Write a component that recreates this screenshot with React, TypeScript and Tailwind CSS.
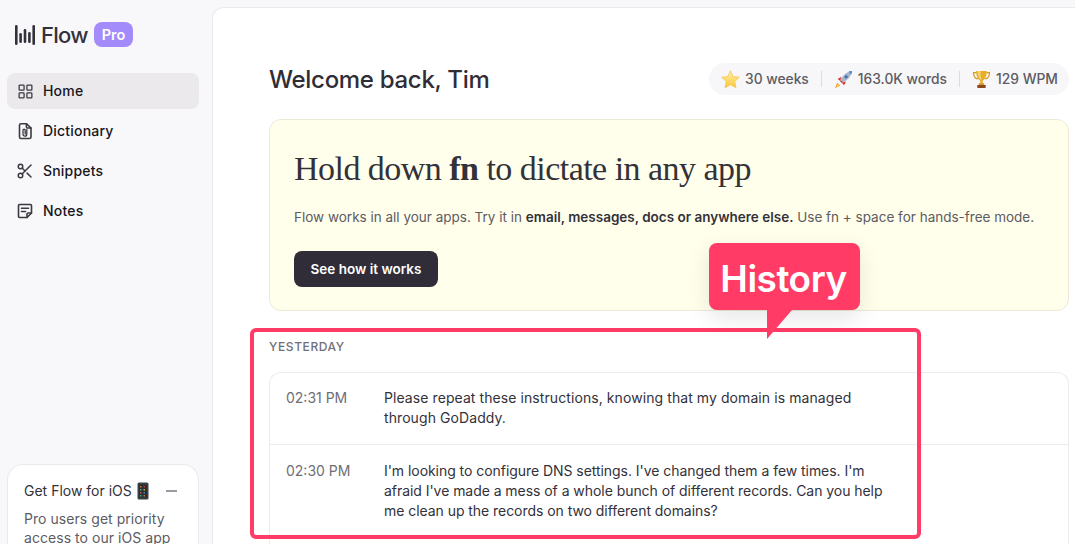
import { LayoutGrid, Scissors } from "lucide-react";

const DictIcon = () => (
  <svg width="18" height="18" viewBox="0 0 18 18" fill="none" stroke="#3b3a42" strokeWidth="1.6" strokeLinecap="round" strokeLinejoin="round">
    <path d="M5 1.800h5.600L15 6v9a1.500 1.500 0 0 1-1.500 1.500h-8.500A1.500 1.500 0 0 1 3.500 15V3.300A1.500 1.500 0 0 1 5 1.800z" />
    <path d="M10.400 1.800v3.200a1 1 0 0 0 1 1H15" />
    <path d="M10.800 7.500v4.700a1.900 1.900 0 0 1-3.800 0V8.300a1.100 1.100 0 0 1 2.200 0v3.700" strokeWidth="1.300" />
  </svg>
);

const NotesIcon = () => (
  <svg width="18" height="18" viewBox="0 0 18 18" fill="none" stroke="#3b3a42" strokeWidth="1.6" strokeLinecap="round" strokeLinejoin="round">
    <path d="M3.500 2.500h11a1 1 0 0 1 1 1V11l-4.500 4.500H3.500a1 1 0 0 1-1-1v-11a1 1 0 0 1 1-1z" />
    <path d="M15.500 11H12a1 1 0 0 0-1 1v3.500" />
    <path d="M5.500 6.300h7M5.500 9.500h4" />
  </svg>
);

const FlowMark = () => (
  <svg width="20" height="20" viewBox="0 0 20 20" fill="#33313a">
    <rect x="0" y="0" width="2.600" height="20" rx="1.300" />
    <rect x="4.300" y="8" width="2.600" height="10" rx="1.300" />
    <rect x="8.700" y="4" width="2.600" height="14" rx="1.300" />
    <rect x="13.100" y="7" width="2.600" height="11" rx="1.300" />
    <rect x="17.400" y="0" width="2.600" height="20" rx="1.300" />
  </svg>
);

const Star = () => (
  <svg width="19" height="19" viewBox="0 0 18 18">
    <defs>
      <linearGradient id="st" x1="0" y1="0" x2="0" y2="1">
        <stop offset="0" stopColor="#fff0a8" />
        <stop offset="1" stopColor="#fcc93a" />
      </linearGradient>
    </defs>
    <path d="M9 .8l2.500 5.400 5.900.700-4.400 4 1.200 5.900L9 13.900l-5.200 2.900L5 10.900.6 6.900l5.900-.7z" fill="url(#st)" stroke="#f5b93a" strokeWidth=".6" strokeLinejoin="round" />
  </svg>
);

const Rocket = () => (
  <svg width="19" height="19" viewBox="0 0 18 18">
    <path d="M1 17l2-5 3 3z" fill="#f59a23" />
    <path d="M2.500 16l1-2.500 1.500 1.500z" fill="#ffd75e" />
    <path d="M3.500 8.500L7 6.500 6 10.500z" fill="#d8322f" />
    <path d="M9.500 14.500L11.500 11 7.500 12z" fill="#d8322f" />
    <path d="M5.800 10.600C7.500 6 11.500 1.800 17 1c-.7 5.500-5 9.500-9.500 11.200z" fill="#a9b5c7" />
    <path d="M13.500 1.700c.9.300 2 1.300 2.800 2.800.4-1 .6-2.300.7-3.500-1.200.1-2.400.3-3.500.7z" fill="#4a7fc4" />
    <circle cx="11.500" cy="6.500" r="1.500" fill="#3b6fb5" />
    <path d="M5.800 10.600l1.700 1.600 1-.5-2.200-2.100z" fill="#d8322f" />
  </svg>
);

const Trophy = () => (
  <svg width="19" height="19" viewBox="0 0 18 18">
    <path d="M4.500 2.500H1.500c0 3.500 1.500 5.500 4 6M13.500 2.500h3c0 3.500-1.500 5.500-4 6" fill="none" stroke="#d99a1c" strokeWidth="1.200" />
    <path d="M4 1h10c0 5-1.500 8-3.800 9v3H7.800v-3C5.500 9 4 6 4 1z" fill="#e8ad2a" />
    <path d="M5.500 1H8c0 4 .3 6.500 1 8.500C7 9 5.500 5.500 5.500 1z" fill="#f7d774" />
    <rect x="6.500" y="12.500" width="5" height="1.800" fill="#d99a1c" />
    <rect x="5" y="14.300" width="8" height="2.700" rx=".4" fill="#8a4a1c" />
  </svg>
);

const Phone = () => (
  <svg width="12" height="18" viewBox="0 0 12 18">
    <rect x=".5" y=".5" width="11" height="17" rx="1.500" fill="#3c4043" />
    <rect x="2" y="2.500" width="8" height="13" fill="#2a2d31" />
    <rect x="3" y="4" width="1.500" height="1.500" fill="#c9773a" />
    <rect x="6.500" y="4" width="1.500" height="1.500" fill="#b33" />
    <rect x="3" y="7" width="1.500" height="1.500" fill="#4a8" />
    <rect x="6.500" y="7" width="1.500" height="1.500" fill="#d9a93a" />
    <rect x="3" y="10" width="1.500" height="1.500" fill="#c55" />
    <rect x="6.500" y="10" width="1.500" height="1.500" fill="#48a" />
    <rect x="3" y="13" width="1.500" height="1.500" fill="#4a8" />
    <rect x="6.500" y="13" width="1.500" height="1.500" fill="#c9773a" />
  </svg>
);

const nav = [
  { label: "Home", icon: <LayoutGrid size={17} strokeWidth={1.8} color="#3b3a42" />, active: true },
  { label: "Dictionary", icon: <DictIcon /> },
  { label: "Snippets", icon: <Scissors size={18} strokeWidth={2} color="#3b3a42" /> },
  { label: "Notes", icon: <NotesIcon /> },
];

export default function App() {
  return (
    <div className="relative flex h-[544px] w-[1075px] overflow-hidden bg-[#f8f8fa] font-['Inter',sans-serif] text-[#33313a]">
      <aside className="flex w-[212px] shrink-0 flex-col px-[7px]">
        <div className="mt-[22px] flex h-[25px] items-center pl-2">
          <FlowMark />
          <span className="ml-[6px] w-[44px] text-[22px] font-medium leading-none tracking-[-0.7px] text-[#33313a]">Flow</span>
          <span className="ml-[9px] flex h-[25px] w-[39px] items-center justify-center rounded-lg bg-[#a48bfb] text-[14.500px] font-semibold text-white">Pro</span>
        </div>
        <nav className="mt-[26px] flex flex-col gap-1">
          {nav.map((n) => (
            <div
              key={n.label}
              className={`flex h-9 w-[192px] items-center rounded-lg pl-[9px] ${n.active ? "bg-[#ebe9ec]" : ""}`}
            >
              <span className="flex w-[18px] justify-center">{n.icon}</span>
              <span className="ml-[9px] -translate-y-px text-[14px] font-medium tracking-[0.2px] text-[#17161c]">{n.label}</span>
            </div>
          ))}
        </nav>
        <div className="mt-auto h-[80px] w-[192px] rounded-t-2xl border border-b-0 border-[#e9e9ee] bg-white pl-4 pr-3 pt-[16px]">
          <div className="flex items-center justify-between">
            <span className="flex items-center gap-[5px] text-[14px] leading-5 text-[#33313a]">
              Get Flow for iOS <Phone />
            </span>
            <span className="mr-[9px] h-[1.500px] w-[11px] bg-[#9a9aa2]" />
          </div>
          <p className="mt-[8px] text-[14px] leading-[19px] tracking-[0.05px] text-[#5d5b63]">
            Pro users get priority access to our iOS app
          </p>
        </div>
      </aside>

      <main className="mt-[7px] flex-1 overflow-hidden rounded-tl-xl border-l border-t border-[#e9e9ee] bg-white pl-[56px] pr-[6px]">
        <header className="mt-[55px] flex h-[32px] items-center justify-between">
          <h1 className="translate-y-px text-[24px] font-medium tracking-[-0.3px] text-[#2f2d36]">Welcome back, Tim</h1>
          <div className="flex h-[32px] w-[360px] items-center rounded-full bg-[#f7f7f9] pl-[12px] text-[13.800px] font-medium text-[#5d5b63]">
            <Star />
            <span className="ml-[5px]">30 weeks</span>
            <span className="mx-[12px] h-4 w-px bg-[#dcdbe0]" />
            <Rocket />
            <span className="ml-[5px]">163.0K words</span>
            <span className="mx-[12px] h-4 w-px bg-[#dcdbe0]" />
            <Trophy />
            <span className="ml-[5px]">129 WPM</span>
          </div>
        </header>

        <section className="mt-[24px] h-[192px] rounded-xl border border-[#eaead6] bg-[#ffffeb] pl-6 pt-[24px]">
          <h2 className="whitespace-nowrap font-['Liberation_Serif',serif] text-[34px] leading-[50px] tracking-[-0.53px] text-[#33313a]">
            Hold down <b className="font-bold">fn</b> to dictate in any app
          </h2>
          <p className="mt-[13px] whitespace-nowrap text-[13.500px] leading-5 text-[#5d5b63]">
            Flow works in all your apps. Try it in{" "}
            <span className="font-semibold text-[#33313a]">email, messages, docs or anywhere else.</span> Use fn + space for hands-free mode.
          </p>
          <button className="mt-[24px] h-9 w-[144px] rounded-lg bg-[#302d38] text-[13.500px] font-semibold text-white">
            See how it works
          </button>
        </section>

        <div className="mt-[28px] text-[12px] font-medium leading-4 tracking-[0.6px] text-[#706e76]">YESTERDAY</div>

        <section className="mt-[17px] rounded-t-xl border border-b-0 border-[#ecebef] text-[14px] leading-5">
          <div className="flex h-[72px] border-b border-[#ecebef] pl-4 pt-[15px]">
            <span className="w-[98px] shrink-0 text-[#706e76]">02:31 PM</span>
            <span className="w-[500px] tracking-[0.08px] text-[#33313a]">
              Please repeat these instructions, knowing that my domain is managed through GoDaddy.
            </span>
          </div>
          <div className="flex h-[100px] pl-4 pt-[16px]">
            <span className="w-[98px] shrink-0 text-[#706e76]">02:30 PM</span>
            <span className="w-[510px] tracking-[-0.05px] text-[#33313a]">
              I'm looking to configure DNS settings. I've changed them a few times. I'm afraid I've made a mess of a whole bunch of different records. Can you help me clean up the records on two different domains?
            </span>
          </div>
        </section>
      </main>

      <div className="absolute left-[250px] top-[328px] h-[211px] w-[671px] rounded-md border-4 border-[#ff3b66]" />
      <div className="absolute left-[709px] top-[243px] flex h-[67px] w-[151px] items-center justify-center rounded-lg bg-[#ff3b66] pr-[2px] pt-[4px] text-[37px] font-semibold tracking-[-0.5px] text-white shadow-[0_8px_24px_rgba(0,0,0,0.1)]">
        History
      </div>
      <svg className="absolute left-[767px] top-[310px]" width="25" height="30" viewBox="0 0 25 30">
        <path d="M0 0h25L0 29z" fill="#ff3b66" />
      </svg>
    </div>
  );
}
